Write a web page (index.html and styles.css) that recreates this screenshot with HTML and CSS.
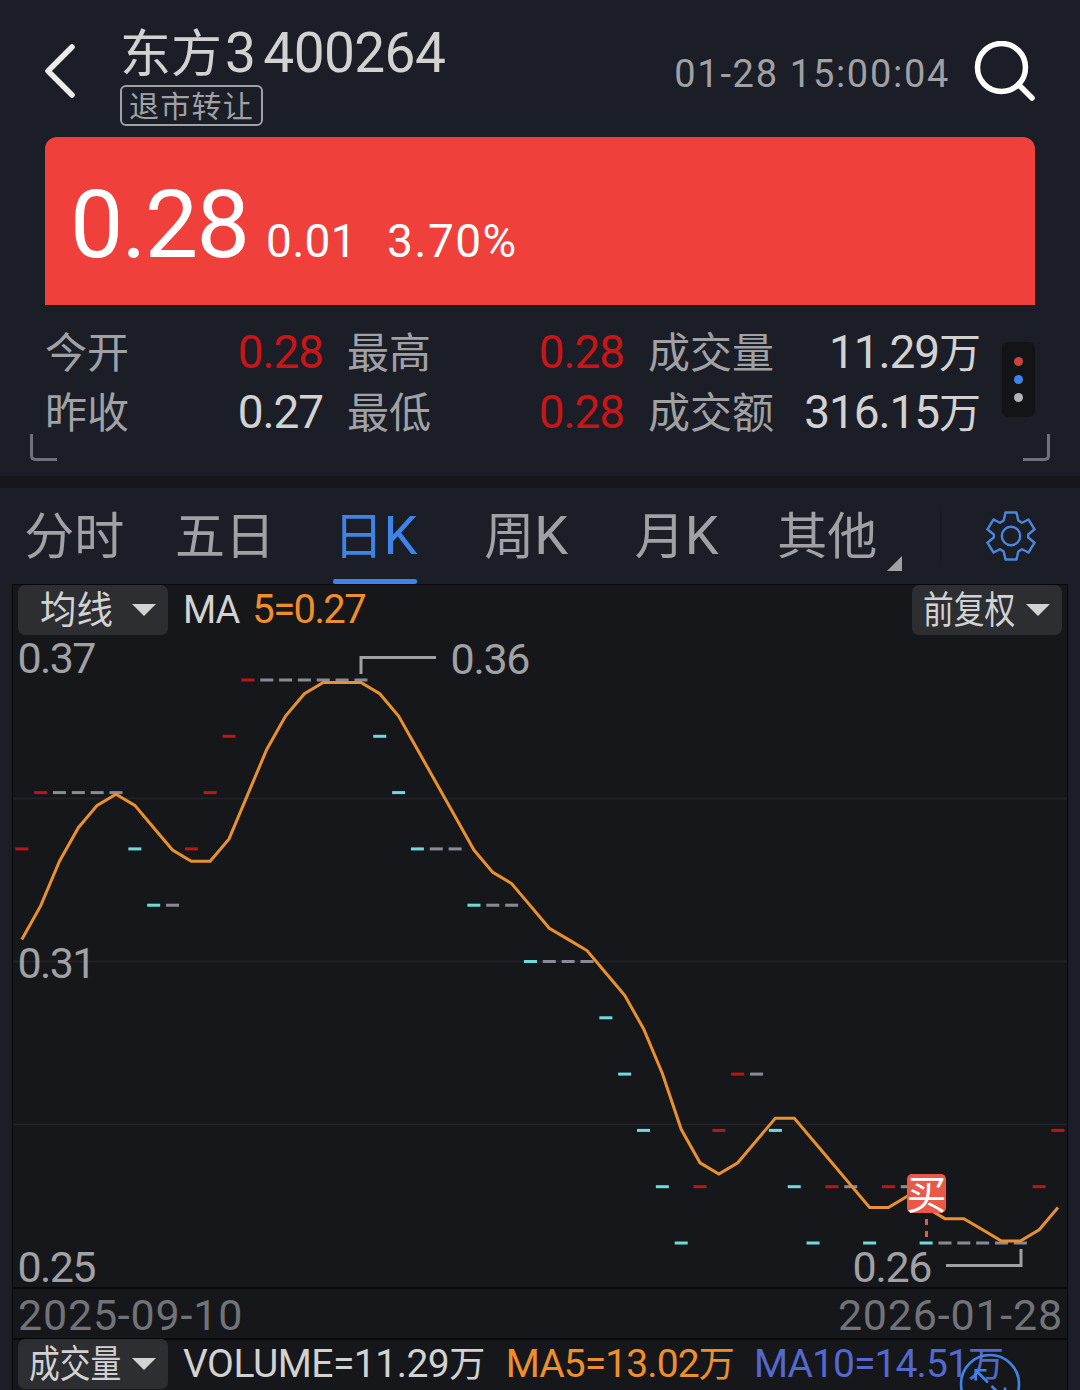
FILE: index.html
```html
<!DOCTYPE html>
<html lang="zh-CN">
<head>
    <meta charset="UTF-8">
    <meta name="viewport" content="width=device-width, initial-scale=1.0">
    <title>东方3 400264</title>
    <link rel="stylesheet" href="styles.css">
</head>
<body>
    <div class="quote">
        <div class="header">
            <svg class="back" width="36" height="60" viewBox="0 0 36 60">
                <path d="M31 6L7 30L31 54"/>
            </svg>
            <div class="stock">
                <div class="stock-name">东方<span class="num">3</span><span class="num code">400264</span></div>
                <div class="stock-tag">退市转让</div>
            </div>
            <div class="time">01-28 15:00:04</div>
            <svg class="search" width="62" height="62" viewBox="0 0 62 62">
                <circle cx="28.5" cy="26.5" r="24"/>
                <path d="M45.5 43.5L59 57"/>
            </svg>
        </div>

        <div class="price-card">
            <span class="price">0.28</span>
            <span class="change">0.01</span>
            <span class="percent">3.70%</span>
        </div>

        <div class="stats">
            <div class="stats-grid">
                <div class="stat"><span>今开</span><span class="value up">0.28</span></div>
                <div class="stat"><span>最高</span><span class="value up">0.28</span></div>
                <div class="stat"><span>成交量</span><span class="value">11.29<i>万</i></span></div>
                <div class="stat"><span>昨收</span><span class="value">0.27</span></div>
                <div class="stat"><span>最低</span><span class="value up">0.28</span></div>
                <div class="stat"><span>成交额</span><span class="value">316.15<i>万</i></span></div>
            </div>
            <div class="more">
                <span class="dot dot-red"></span>
                <span class="dot dot-blue"></span>
                <span class="dot dot-gray"></span>
            </div>
        </div>

        <div class="corners">
            <span class="corner corner-left"></span>
            <span class="corner corner-right"></span>
        </div>
    </div>

    <div class="tabs">
        <div class="tab">分时</div>
        <div class="tab">五日</div>
        <div class="tab active">日<span class="k">K</span></div>
        <div class="tab">周<span class="k">K</span></div>
        <div class="tab">月<span class="k">K</span></div>
        <div class="tab tab-other">其他</div>
        <div class="settings">
            <svg width="50" height="50" viewBox="0 0 50 50">
                <path d="M19.5 1.5H30.5L32.3 9.5L36 11.8L42.5 8.5L48.6 18.3L42.2 23.5V26.5L48.6 31.7L42.5 41.5L36 38.2L32.3 40.5L30.5 48.5H19.5L17.7 40.5L14 38.2L7.5 41.5L1.4 31.7L7.8 26.5V23.5L1.4 18.3L7.5 8.5L14 11.8L17.7 9.5Z"/>
                <circle cx="25" cy="25" r="9.2"/>
            </svg>
        </div>
    </div>

    <div class="chart-panel">
        <div class="legend">
            <button class="picker"><span class="picker-text two">均线</span></button>
            <span class="legend-ma">MA</span>
            <span class="legend-ma5">5=0.27</span>
            <button class="picker picker-right"><span class="picker-text">前复权</span></button>
        </div>

        <svg class="chart" id="chart" width="1054" height="652" viewBox="13 635 1054 652">
            <g class="grid-lines">
                <path d="M13 798.5H1067M13 961.5H1067M13 1124.5H1067"/>
            </g>
            <g id="bars"></g>
            <polyline id="ma5" class="ma5"/>
            <g class="labels">
                <text x="17.5" y="673" textLength="79">0.37</text>
                <text x="17.5" y="978" textLength="79">0.31</text>
                <text x="17.5" y="1282" textLength="79">0.25</text>
                <text x="450.5" y="674" textLength="80">0.36</text>
                <text x="852.5" y="1282" textLength="80">0.26</text>
            </g>
            <path class="pointer" d="M361 674V657.5H436"/>
            <path class="pointer" d="M946 1265.5H1021V1249"/>
            <path class="buy-line" d="M926.5 1219V1240"/>
            <rect class="buy" x="907" y="1174" width="39" height="39" rx="5"/>
            <text class="buy-text" x="926.5" y="1209">买</text>
        </svg>

        <div class="dates">
            <span>2025-09-10</span>
            <span>2026-01-28</span>
        </div>

        <div class="legend volume">
            <button class="picker"><span class="picker-text">成交量</span></button>
            <span class="vol">VOLUME=11.29<i>万</i></span>
            <span class="vol-ma5">MA5=13.02<i>万</i></span>
            <span class="vol-ma10">MA10=14.51<i>万</i></span>
        </div>

        <svg class="expand" width="62" height="37" viewBox="0 0 62 37">
            <circle cx="31" cy="31" r="29"/>
            <path d="M29 29.5L17 17.5M16.7 27.5V17.3H27.5M32.5 33L46 46M46 34.5V46H35"/>
        </svg>
    </div>

    <script src="chart.js"></script>
</body>
</html>
```

FILE: styles.css
```css
* {
    box-sizing: border-box;
}

body {
    margin: 0;
    width: 1080px;
    height: 1390px;
    overflow: hidden;
    background-color: #1b1e27;
    color: #d2d2d3;
    font-family: Roboto, "Noto Sans CJK SC", sans-serif;
}

i {
    font-style: normal;
}

.quote {
    height: 488px;
    padding: 0 45px;
    border-bottom: 12px solid #16171b;
}

.header {
    display: flex;
    height: 137px;
}

.back {
    margin: 41px 0 0 -4px;
    fill: none;
    stroke: #ececed;
    stroke-width: 5.5;
    stroke-linecap: round;
    stroke-linejoin: round;
}

.stock {
    flex: 1;
    padding: 21px 0 0 43px;
}

.stock-name {
    height: 64px;
    font-size: 51px;
    line-height: 64px;
    white-space: nowrap;
}

.stock-name .num {
    margin-left: 3px;
    font-size: 55px;
    letter-spacing: -0.6px;
}

.stock-name .code {
    margin-left: 8px;
}

.stock-tag {
    width: 143px;
    height: 41px;
    padding-top: 1px;
    border: 2px solid #a0a1a5;
    border-radius: 6px;
    color: #a0a1a5;
    font-size: 30px;
    letter-spacing: 1.3px;
    line-height: 37px;
    text-align: center;
    white-space: nowrap;
}

.time {
    margin: 46px 23px 0 0;
    color: #a0a1a5;
    font-size: 38px;
    letter-spacing: 1.7px;
    line-height: 56px;
    white-space: nowrap;
}

.search {
    margin: 41px 0 0;
    fill: none;
    stroke: #fff;
    stroke-width: 5.5;
    stroke-linecap: round;
}

.price-card {
    display: flex;
    align-items: baseline;
    height: 168px;
    padding-left: 25px;
    border-radius: 12px 12px 0 0;
    background-color: #ef403c;
    color: #fff;
    line-height: 176px;
}

.price {
    font-size: 95px;
    letter-spacing: -1.8px;
}

.change {
    margin-left: 18px;
    font-size: 46px;
    letter-spacing: 0.3px;
}

.percent {
    margin-left: 30px;
    font-size: 46px;
    letter-spacing: 1.5px;
}

.stats {
    display: flex;
    height: 127px;
    padding-top: 17px;
}

.stats-grid {
    display: grid;
    grid-template-columns: 278px 277px 333px;
    grid-template-rows: 60px 60px;
    column-gap: 24px;
    width: 937px;
}

.stat {
    display: flex;
    justify-content: space-between;
    align-items: baseline;
    color: #a0a1a5;
    font-size: 42px;
    line-height: 60px;
}

.value {
    color: #d2d2d3;
    font-size: 46px;
    letter-spacing: -1.1px;
}

.value i {
    font-size: 42px;
    letter-spacing: 0;
}

.up {
    color: #c81518;
}

.more {
    display: flex;
    flex-direction: column;
    align-items: center;
    justify-content: center;
    gap: 9px;
    width: 33px;
    height: 75px;
    margin: 20px 0 0 20px;
    border-radius: 6px;
    background-color: #131418;
}

.dot {
    width: 9px;
    height: 9px;
    border-radius: 50%;
}

.dot-red {
    background-color: #c8463a;
}

.dot-blue {
    background-color: #3e84e8;
}

.dot-gray {
    background-color: #b4b4b8;
}

.corners {
    display: flex;
    justify-content: space-between;
    margin: 2px -15px 0;
}

.corner {
    width: 27px;
    height: 27px;
    border-bottom: 3px solid #6f7279;
}

.corner-left {
    border-left: 3px solid #6f7279;
    border-bottom-left-radius: 5px;
}

.corner-right {
    border-right: 3px solid #6f7279;
    border-bottom-right-radius: 5px;
}

.tabs {
    display: grid;
    grid-template-columns: repeat(6, 150.6px) 1fr;
    height: 96px;
}

.tab {
    position: relative;
    padding-right: 2px;
    color: #a0a1a5;
    font-size: 50px;
    line-height: 99px;
    text-align: center;
    white-space: nowrap;
}

.k {
    font-size: 54px;
    line-height: 90px;
}

.tab.active {
    color: #3e84e8;
}

.tab.active::after {
    content: "";
    position: absolute;
    left: 32px;
    top: 91px;
    width: 84px;
    height: 5px;
    border-radius: 2px;
    background-color: #3e84e8;
}

.tab-other::after {
    content: "";
    position: absolute;
    right: 2px;
    top: 68px;
    border-left: 15px solid transparent;
    border-bottom: 15px solid #a0a1a5;
}

.settings {
    display: flex;
    justify-content: flex-end;
    height: 50px;
    margin: 23px 44px 0 36px;
    border-left: 2px solid #181a21;
}

.settings svg {
    fill: none;
    stroke: #4a86dc;
    stroke-width: 2.4;
    stroke-linejoin: round;
}

.chart-panel {
    position: relative;
    width: 1056px;
    height: 806px;
    margin: 0 12px;
    border: 1px solid #07080b;
    border-bottom: none;
    background-color: #16171b;
}

.legend {
    display: flex;
    align-items: baseline;
    height: 50px;
    padding: 0 5px;
    line-height: 50px;
    white-space: nowrap;
}

.picker {
    display: flex;
    align-items: center;
    justify-content: space-between;
    flex: none;
    width: 150px;
    height: 50px;
    padding: 0 12px 0 11px;
    border: none;
    border-radius: 7px;
    background-color: #2d2e32;
    color: #d2d2d3;
    font-family: inherit;
    font-size: 38px;
    line-height: 50px;
}

.picker::after {
    content: "";
    border: 12px solid transparent;
    border-top: 12px solid #d2d2d3;
    border-bottom: none;
}

.picker-right {
    margin-left: auto;
}

.picker-text {
    width: 92px;
    transform: scaleX(0.81);
    transform-origin: left;
}

.picker-text.two {
    padding-left: 7px;
    transform: scaleX(0.96);
}

.legend-ma {
    margin-left: 15px;
    font-size: 38px;
    letter-spacing: -1px;
}

.legend-ma5 {
    margin-left: 13px;
    color: #f08f2a;
    font-size: 40px;
    letter-spacing: -1.6px;
}

.chart {
    display: block;
    overflow: visible;
    font-size: 43px;
}

.grid-lines {
    stroke: #222429;
    stroke-width: 1.5;
}

.labels {
    fill: #a0a1a5;
}

.ma5 {
    fill: none;
    stroke: #e9902f;
    stroke-width: 3;
}

.bar {
    height: 3px;
}

.bar-up {
    fill: #c01518;
}

.bar-down {
    fill: #6fdcdc;
}

.bar-flat {
    fill: #8a8b95;
}

.pointer {
    fill: none;
    stroke: #a0a1a5;
    stroke-width: 3;
}

.buy {
    fill: #ea5948;
}

.buy-text {
    fill: #fff;
    font-size: 40px;
    text-anchor: middle;
}

.buy-line {
    stroke: #d0604f;
    stroke-width: 3;
    stroke-dasharray: 6 6;
}

.dates {
    display: flex;
    justify-content: space-between;
    height: 53px;
    padding: 0 4px 0 5px;
    border-top: 2px solid #07080b;
    border-bottom: 2px solid #07080b;
    color: #727378;
    font-size: 43px;
    letter-spacing: 0.8px;
    line-height: 52px;
}

.volume {
    margin-top: -1px;
}

.vol {
    margin-left: 15px;
    font-size: 39px;
    letter-spacing: -0.5px;
}

.vol-ma5 {
    margin-left: 21px;
    color: #f08f2a;
    font-size: 39px;
    letter-spacing: -0.9px;
}

.vol-ma10 {
    margin-left: 20px;
    color: #5468cf;
    font-size: 39px;
    letter-spacing: -0.9px;
}

.volume i {
    font-size: 36px;
}

.expand {
    position: absolute;
    left: 946px;
    bottom: 0;
    fill: none;
    stroke: #3e84e8;
    stroke-width: 2.6;
}
```

FILE: chart.js
```js
// closing prices in cents; the first four only feed the moving average
const closes = [
    31, 30, 31, 32,
    33, 34, 34, 34, 34, 34, 33, 32, 32, 33, 34, 35, 36, 36,
    36, 36, 36, 36, 36, 35, 34, 33, 33, 33, 32, 32, 32, 31,
    31, 31, 31, 30, 29, 28, 27, 26, 27, 28, 29, 29, 28, 27,
    26, 27, 27, 26, 27, 27, 26, 26, 26, 26, 26, 26, 27, 28
];

const svgNS = 'http://www.w3.org/2000/svg';
const bars = document.getElementById('bars');
const points = [];

for (let i = 4; i < closes.length; i++) {
    const x = 21.8 + (i - 4) * 18.84;
    const diff = closes[i] - closes[i - 1];

    const bar = document.createElementNS(svgNS, 'rect');
    bar.setAttribute('class', 'bar ' + (diff > 0 ? 'bar-up' : diff < 0 ? 'bar-down' : 'bar-flat'));
    bar.setAttribute('x', x - 6.5);
    bar.setAttribute('y', 678.5 + (36 - closes[i]) * 56.3);
    bar.setAttribute('width', 13);
    bars.appendChild(bar);

    const sum = closes.slice(i - 4, i + 1).reduce((a, b) => a + b, 0);
    points.push(x + ',' + (682.5 + (36 - sum / 5) * 55.85));
}

document.getElementById('ma5').setAttribute('points', points.join(' '));
```
